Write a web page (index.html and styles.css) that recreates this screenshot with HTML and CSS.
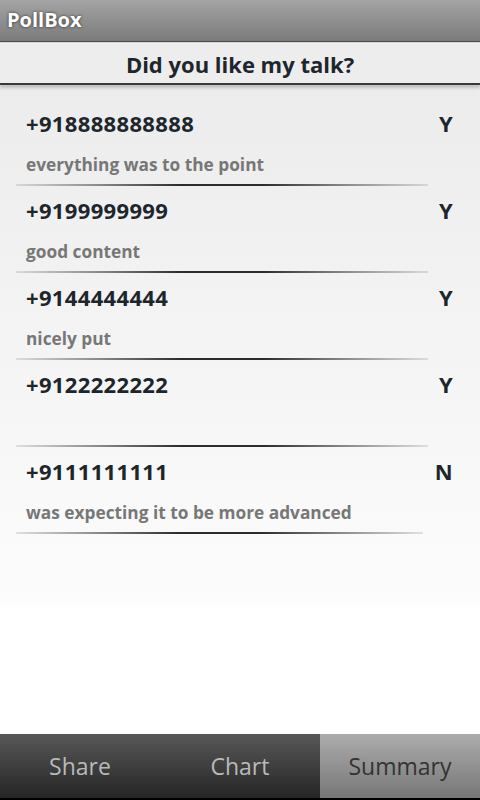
FILE: index.html
```html
<!DOCTYPE html>
<html>
<head>
    <title>PollBox</title>
    <link rel="stylesheet" href="styles.css">
</head>
<body>
    <div id="app">
        <div class="title-bar">PollBox</div>
        <div class="question">Did you like my talk?</div>

        <div class="responses">
            <div class="response">
                <div class="response-top">
                    <span class="number">+918888888888</span>
                    <span class="vote">Y</span>
                </div>
                <div class="comment">everything was to the point</div>
                <div class="divider"></div>
            </div>
            <div class="response">
                <div class="response-top">
                    <span class="number">+9199999999</span>
                    <span class="vote">Y</span>
                </div>
                <div class="comment">good content</div>
                <div class="divider"></div>
            </div>
            <div class="response">
                <div class="response-top">
                    <span class="number">+9144444444</span>
                    <span class="vote">Y</span>
                </div>
                <div class="comment">nicely put</div>
                <div class="divider"></div>
            </div>
            <div class="response">
                <div class="response-top">
                    <span class="number">+9122222222</span>
                    <span class="vote">Y</span>
                </div>
                <div class="comment"></div>
                <div class="divider"></div>
            </div>
            <div class="response">
                <div class="response-top">
                    <span class="number">+9111111111</span>
                    <span class="vote">N</span>
                </div>
                <div class="comment">was expecting it to be more advanced</div>
                <div class="divider short"></div>
            </div>
        </div>

        <!-- bottom tabs -->
        <div class="tabs">
            <div class="tab">Share</div>
            <div class="tab">Chart</div>
            <div class="tab selected">Summary</div>
        </div>
    </div>
</body>
</html>
```

FILE: styles.css
```css
/* Reset some default styles */
body {
    font-family: "Open Sans", "DejaVu Sans", sans-serif;
    margin: 0;
    padding: 0;
    background-color: #fff;
}

#app {
    display: flex;
    flex-direction: column;
    height: 800px;
}

/* Title bar */
.title-bar {
    height: 41px;
    line-height: 40px;
    padding-left: 7px;
    font-size: 20px;
    font-weight: bold;
    color: #fff;
    text-shadow: 0 0 3px rgba(0, 0, 0, 0.7);
    background: linear-gradient(#a4a4a4, #7b7b7b);
    border-bottom: 1px solid #4a4a4a;
}

/* Question header */
.question {
    height: 40px;
    line-height: 42px;
    text-align: center;
    font-size: 22px;
    font-weight: bold;
    color: #1d262c;
    background-color: #ededed;
    border-top: 1px solid #d8d8d8;
    border-bottom: 2px solid #3a3a3a;
    box-shadow: 0 3px 3px rgba(0, 0, 0, 0.18);
    position: relative;
}

/* List of responses */
.responses {
    flex: 1;
    padding-top: 14px;
    background: linear-gradient(#ececec, #fcfcfc 517px, #fff 522px);
}

.response {
    padding: 0 27px 0 26px;
}

.response-top {
    display: flex;
    justify-content: space-between;
    padding-top: 10px;
    height: 30px;
    line-height: 29px;
    font-size: 22px;
    font-weight: bold;
    letter-spacing: 0.35px;
    color: #1d262c;
}

.comment {
    margin-top: 14px;
    height: 24px;
    line-height: 24px;
    font-size: 17.3px;
    font-weight: bold;
    color: #777;
}

.divider {
    margin: 7px 25px 0 -10px;
    height: 2px;
    background: linear-gradient(to right, rgba(80, 80, 80, 0.15), #8a8a8a 20%, #2c2c2c 40%, #2c2c2c 60%, #8a8a8a 80%, rgba(80, 80, 80, 0.15));
}

.divider.short {
    margin-right: 30px;
}

/* Bottom tabs */
.tabs {
    display: flex;
    height: 64px;
    border-bottom: 2px solid #000;
}

.tab {
    flex: 1;
    text-align: center;
    line-height: 64px;
    font-size: 23px;
    color: #b9b9b9;
    background: linear-gradient(#585858, #252525);
}

.tab.selected {
    color: #333;
    background: linear-gradient(#acacac, #777);
}
```
